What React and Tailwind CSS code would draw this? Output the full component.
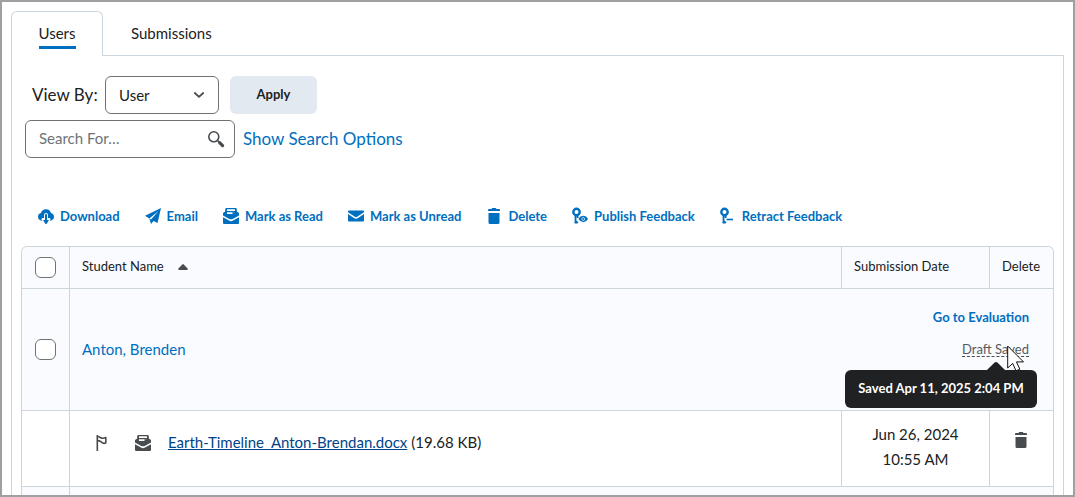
import { useState } from "react";

const actions = [
  { label: "Download", icon: DownloadIcon },
  { label: "Email", icon: EmailIcon },
  { label: "Mark as Read", icon: MailOpenIcon },
  { label: "Mark as Unread", icon: MailClosedIcon },
  { label: "Delete", icon: TrashIcon },
  { label: "Publish Feedback", icon: PublishIcon },
  { label: "Retract Feedback", icon: RetractIcon },
];

export default function App() {
  const [viewBy, setViewBy] = useState("user");
  const [search, setSearch] = useState("");

  return (
    <div className="h-screen overflow-hidden border-2 border-[#a0a0a0] bg-white px-[9px] pt-[9px] font-['Lato',sans-serif] text-[#202122]">
      <nav className="flex">
        <a
          href="#users"
          className="flex h-[45px] w-[92px] justify-center rounded-t-md border border-b-0 border-[#cdd5dc] pt-[11px] text-[15px] leading-5"
        >
          <span className="h-[26px] border-b-3 border-[#006fbf]">Users</span>
        </a>
        <a
          href="#submissions"
          className="flex-1 border-b border-[#cdd5dc] pt-3 pl-7 text-[15px] leading-5"
        >
          Submissions
        </a>
      </nav>

      <main className="min-h-screen border-x border-[#cdd5dc] px-[9px] pt-5">
        <div className="flex items-center pl-[11px]">
          <label htmlFor="view-by" className="w-[73px] text-[17px] leading-6">
            View By:
          </label>
          <div className="relative">
            <select
              id="view-by"
              value={viewBy}
              onChange={(e) => setViewBy(e.target.value)}
              className="block h-[38px] w-[114px] appearance-none rounded-md border border-[#6e7376] bg-white pl-[13px] text-[15px]"
            >
              <option value="user">User</option>
              <option value="group">Group</option>
            </select>
            <svg
              className="pointer-events-none absolute top-[15px] right-3.5 h-2 w-3"
              viewBox="0 0 12 8"
              fill="none"
              stroke="#494c4e"
              strokeWidth="1.8"
              strokeLinecap="round"
              strokeLinejoin="round"
            >
              <path d="M1.8 2L6 5.8 10.2 2" />
            </svg>
          </div>
          <button className="ml-[11px] h-[38px] w-[87px] rounded-md bg-[#e3e9f1] text-[13px] font-bold">
            Apply
          </button>
        </div>

        <div className="mt-1.5 flex items-center pl-1">
          <div className="relative">
            <input
              type="text"
              aria-label="Search For"
              placeholder="Search For…"
              value={search}
              onChange={(e) => setSearch(e.target.value)}
              className="block h-[38px] w-[210px] rounded-md border border-[#6e7376] pr-10 pb-0.5 pl-[13px] text-[15px] placeholder:text-[#6e7376]"
            />
            <button aria-label="Search" className="absolute top-2.5 right-2.5">
              <SearchIcon />
            </button>
          </div>
          <a href="#options" className="ml-2 text-[17px] leading-6 text-[#006fbf]">
            Show Search Options
          </a>
        </div>

        <div className="mt-[47px] flex gap-6 pl-4">
          {actions.map(({ label, icon: Icon }) => (
            <button
              key={label}
              className="flex items-center gap-[5px] text-[13px] leading-[22px] font-bold whitespace-nowrap text-[#006fbf]"
            >
              <Icon />
              {label}
            </button>
          ))}
        </div>

        <table className="mt-[19px] w-full table-fixed border-separate border-spacing-0 rounded-t-md border border-b-0 border-[#cdd5dc]">
          <colgroup>
            <col className="w-12" />
            <col />
            <col className="w-[148px]" />
            <col className="w-[63px]" />
          </colgroup>
          <thead>
            <tr className="h-[42px] bg-[#f9fbff] text-left text-[13px]">
              <th className="rounded-tl-md border-r border-b border-[#cdd5dc] bg-[#f9fbff]">
                <Checkbox label="Select all rows" />
              </th>
              <th className="border-r border-b border-[#cdd5dc] pb-0.5 pl-3 font-normal">
                <span className="flex items-center gap-3.5">
                  Student Name
                  <svg className="h-1.5 w-2.5" viewBox="0 0 10 6" fill="#494c4e">
                    <path d="M4.3.4a1 1 0 0 1 1.4 0L9.6 4.6Q10 6 9 6H1Q0 6 .4 4.6z" />
                  </svg>
                </span>
              </th>
              <th className="border-r border-b border-[#cdd5dc] pb-0.5 pl-3 font-normal">
                Submission Date
              </th>
              <th className="rounded-tr-md border-b border-[#cdd5dc] bg-[#f9fbff] pb-0.5 pl-3 font-normal">
                Delete
              </th>
            </tr>
          </thead>
          <tbody>
            <tr className="h-[122px] bg-[#f9fbff]">
              <td className="border-r border-b border-[#cdd5dc]">
                <Checkbox label="Select Anton, Brenden" />
              </td>
              <td colSpan={3} className="border-b border-[#cdd5dc] pr-6 pl-3">
                <div className="flex items-center justify-between">
                  <a href="#anton" className="text-[15px] text-[#006fbf]">
                    Anton, Brenden
                  </a>
                  <div className="flex flex-col items-end gap-[15px] pb-9 text-[13px]">
                    <a href="#evaluation" className="leading-5 font-bold text-[#006fbf]">
                      Go to Evaluation
                    </a>
                    <DraftStatus />
                  </div>
                </div>
              </td>
            </tr>
            <tr className="h-[76px]">
              <td className="border-r border-b border-[#cdd5dc]" />
              <td className="border-r border-b border-[#cdd5dc] pb-3 pl-[23px]">
                <div className="flex items-center text-[15px]">
                  <button aria-label="Flag" className="mr-[23px]">
                    <FlagIcon />
                  </button>
                  <span className="mr-4 text-[#494c4e]">
                    <MailOpenIcon />
                  </span>
                  <a href="#file" className="mr-1 text-[#004489] underline">
                    Earth-Timeline_Anton-Brendan.docx
                  </a>
                  (19.68 KB)
                </div>
              </td>
              <td className="border-r border-b border-[#cdd5dc] pb-1 text-center text-[15px] leading-[25px]">
                Jun 26, 2024
                <br />
                10:55 AM
              </td>
              <td className="border-b border-[#cdd5dc] pr-0.5 pb-[18px]">
                <button aria-label="Delete submission" className="mx-auto block text-[#494c4e]">
                  <TrashIcon />
                </button>
              </td>
            </tr>
            <tr className="h-[122px] bg-[#f9fbff]">
              <td className="border-r border-[#cdd5dc]" />
              <td colSpan={3} />
            </tr>
          </tbody>
        </table>
      </main>
    </div>
  );
}

function Checkbox({ label }) {
  return (
    <input
      type="checkbox"
      aria-label={label}
      className="mx-auto block h-[21px] w-[21px] appearance-none rounded-md border border-[#6e7376] bg-white checked:bg-[#006fbf]"
    />
  );
}

function DraftStatus() {
  return (
    <div className="relative">
      <span className="block border-b border-dashed border-[#494c4e] leading-[14px] text-[#565a5c]">
        Draft Saved
      </span>
      <div
        role="tooltip"
        className="absolute top-7 -right-2 flex h-[38px] w-48 items-center justify-center rounded-md bg-[#202122] text-[13px] font-bold whitespace-nowrap text-white"
      >
        Saved Apr 11, 2025 2:04 PM
        <svg className="absolute -top-2 right-8 h-2 w-[18px]" viewBox="0 0 18 8" fill="#202122">
          <path d="M0 8L7.6.6Q9-.4 10.4.6L18 8z" />
        </svg>
      </div>
      <svg
        className="absolute top-[3px] right-1 h-[27px] w-[18px]"
        viewBox="0 0 18 27"
        fill="#fff"
        stroke="#111"
        strokeWidth="1"
      >
        <path d="M.7 1v22l5-4.6 3.3 7.4 3.8-1.6-3.3-7.3h7z" />
      </svg>
    </div>
  );
}

function DownloadIcon() {
  return (
    <svg width="18" height="18" viewBox="0 0 18 18" fill="currentColor">
      <path d="M14 6.1A5.2 5.2 0 0 0 4 5.9 4 4 0 0 0 1 9.8c0 2.2 1.7 3.9 3.7 3.9h.6L4.7 13c-.5-.9.1-1.9 1.1-1.9H7V8a2 2 0 0 1 4 0v3.1h1.2c1 0 1.6 1 1.1 1.9l-.6.7h.6c2.1 0 3.7-1.7 3.7-3.9 0-1.9-1.3-3.4-3-3.7z" />
      <path d="M8 8a1 1 0 0 1 2 0v5h2l-2.3 3.7a.9.9 0 0 1-1.4 0L6 13h2z" />
    </svg>
  );
}

function EmailIcon() {
  return (
    <svg width="18" height="18" viewBox="0 0 18 18" fill="currentColor">
      <path d="M17 1L1 8.8l4.3 2.6L14.5 4 7 12.6V17l2.5-3 4 2z" />
      <path d="M5.3 11.4L7 17v-4.4z" />
    </svg>
  );
}

function MailOpenIcon() {
  return (
    <svg width="18" height="18" viewBox="0 0 18 18" fill="currentColor">
      <path
        fillRule="evenodd"
        d="M4 1h10l.8 1v2.500L17 6v2.600l-6.300 3.300a3.600 3.600 0 0 1-3.400 0L1 8.600V6l2.200-1.500V2zM5 2.300V4h8V2.300zM5 5.300V7h8V5.300z"
      />
      <path d="M10.500 5.300H13V7h-2.500zM1 10.300l6 3.300a4.200 4.200 0 0 0 4 0l6-3.300V16a1 1 0 0 1-1 1H2a1 1 0 0 1-1-1z" />
    </svg>
  );
}

function MailClosedIcon() {
  return (
    <svg width="18" height="18" viewBox="0 0 18 18" fill="currentColor">
      <path d="M2 3.5h14q1 0 1 1v.8L10.5 9.6a2.7 2.7 0 0 1-3 0L1 5.3v-.8q0-1 1-1z" />
      <path d="M1 7l5.9 4a3.8 3.8 0 0 0 4.2 0L17 7v6.5q0 1-1 1H2q-1 0-1-1z" />
    </svg>
  );
}

function TrashIcon() {
  return (
    <svg width="18" height="18" viewBox="0 0 18 18" fill="currentColor">
      <path d="M4 2h2.5l.7-1h3.6l.7 1H14q1 0 1 1v1H3V3q0-1 1-1zM3.500 6h11v9.500q0 1.500-1.500 1.500H5q-1.500 0-1.500-1.500z" />
    </svg>
  );
}

function PublishIcon() {
  return (
    <svg width="18" height="18" viewBox="0 0 18 18" fill="none" stroke="currentColor">
      <circle cx="5.5" cy="5" r="3.2" strokeWidth="2.4" />
      <path d="M4.500 8v8.500M3.800 16l1.400-1.500 1.600 1.500M6.600 8v3" strokeWidth="1.800" />
      <path
        fill="currentColor"
        fillRule="evenodd"
        stroke="none"
        d="M7.500 12q1.800-3.200 4.800-3.200T17 12q-1.800 3.200-4.700 3.200T7.500 12zm4.700-1.700a1.700 1.700 0 1 0 0 3.400 1.700 1.700 0 0 0 0-3.400z"
      />
      <circle cx="12.200" cy="12" r="1.100" fill="currentColor" stroke="none" />
    </svg>
  );
}

function RetractIcon() {
  return (
    <svg width="18" height="18" viewBox="0 0 18 18" fill="none" stroke="currentColor">
      <circle cx="5.5" cy="5" r="3.2" strokeWidth="2.4" />
      <path d="M4.500 8v8.500M3.800 16l1.400-1.500 1.600 1.500M6.600 8v3" strokeWidth="1.800" />
      <path d="M7.500 12.500H14" strokeWidth="1.600" />
    </svg>
  );
}

function FlagIcon() {
  return (
    <svg width="18" height="18" viewBox="0 0 18 18" fill="none" stroke="#494c4e" strokeWidth="1.6">
      <path d="M4.300 17V1" />
      <path
        d="M4.300 2.500c2.500.2 3.500 1.800 5.500 1.700q1.800 0 3-.7v5.300c-2.500 1.500-3.700 0-5-1.200-1-.8-2.200-1-3.500-1"
        strokeLinejoin="round"
      />
    </svg>
  );
}

function SearchIcon() {
  return (
    <svg width="18" height="18" viewBox="0 0 18 18" fill="none" stroke="#494c4e">
      <circle cx="6.8" cy="6.8" r="5" strokeWidth="1.6" />
      <path d="M10.500 10.500l2 2" strokeWidth="1.600" />
      <path d="M12.600 12.600l3 3" strokeWidth="3.200" strokeLinecap="round" />
    </svg>
  );
}
